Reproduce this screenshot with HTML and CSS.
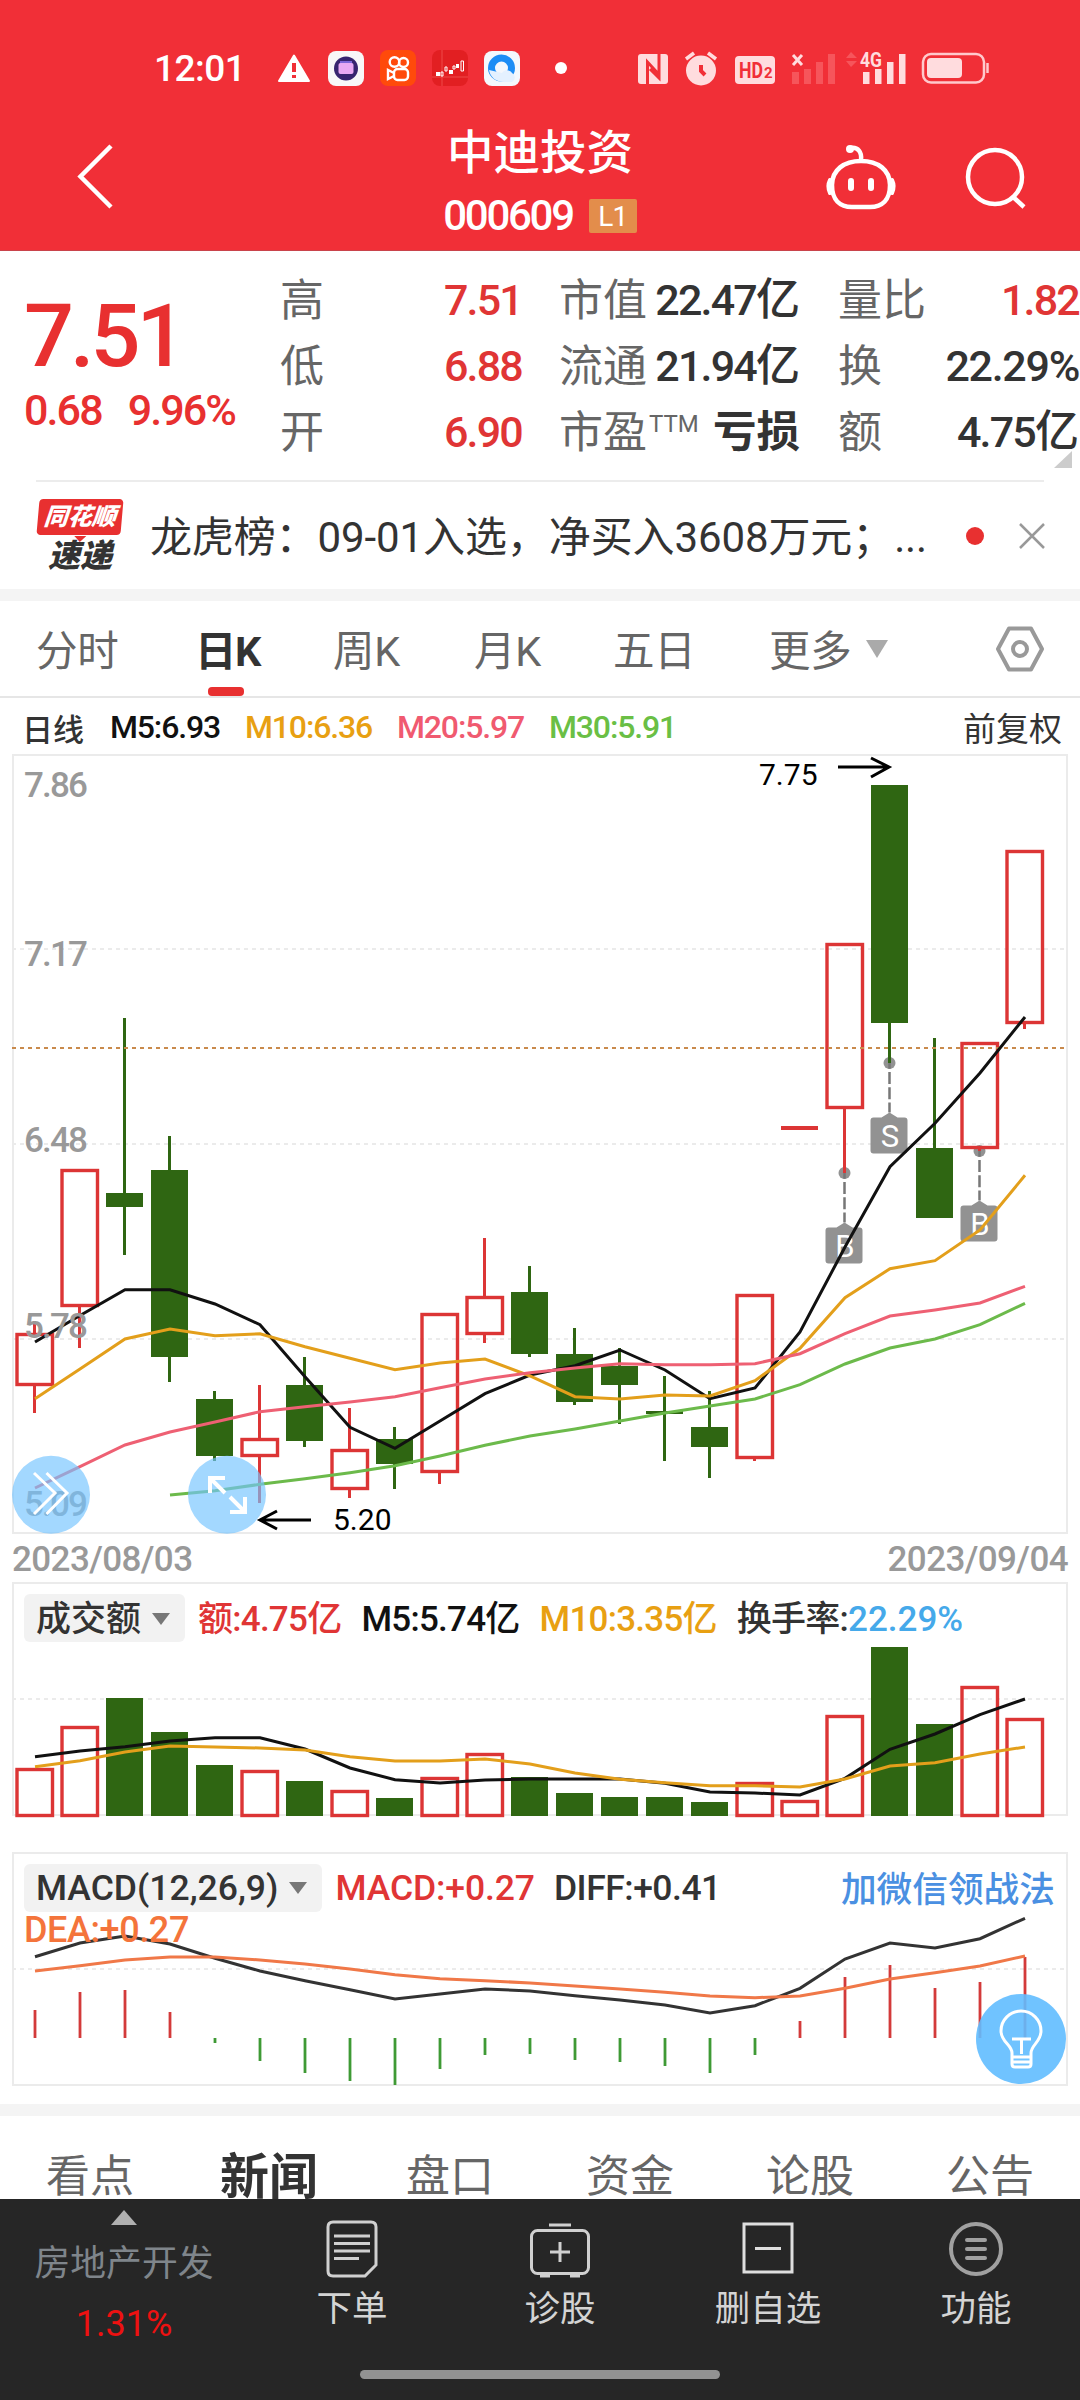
FILE: index.html
```html
<!DOCTYPE html>
<html lang="zh-CN">
<head>
<meta charset="utf-8">
<title>中迪投资 000609</title>
<link rel="stylesheet" href="styles.css">
</head>
<body>
<div class="app">
  <header class="top">
    <div class="status">
      <span class="clock">12:01</span>
      <svg class="status-apps" width="300" height="60" viewBox="270 40 300 60">
        <path d="M294 55.500L309 81H279Z" fill="#fff" stroke="#fff" stroke-width="2" stroke-linejoin="round"/>
        <path d="M294 63v9M294 75v3" stroke="#f12f37" stroke-width="4"/>
        <rect x="328" y="51" width="36" height="35" rx="8" fill="#f8f7f8"/>
        <circle cx="346" cy="68.500" r="12" fill="#37246f"/><path d="M340 61h12v3h-12z" fill="#7d66d8"/><rect x="338.500" y="63" width="15" height="11" rx="2" fill="#e9a9f3"/>
        <rect x="380" y="50" width="36" height="36" rx="8" fill="#ff4a0b"/>
        <g fill="none" stroke="#fff" stroke-width="2.400"><circle cx="394.500" cy="62" r="4.800"/><circle cx="403.500" cy="62.500" r="4.500"/><rect x="394" y="69" width="14" height="11" rx="3.500"/><path d="M394 73l-6-3v9l6-3"/></g>
        <rect x="432" y="50" width="36" height="36" rx="8" fill="#e21f22"/>
        <path d="M442 50v36M432 77h36" stroke="#ee4a48" stroke-width="1"/>
        <path d="M436 74h4M449 72h4M456 66h3" stroke="#fff" stroke-width="4"/><path d="M441 72h2v4h-2zM445 67h2v4h-2zM453 66h2v3h-2zM461 61h2.500v10h-2.500z" fill="none" stroke="#fff"/>
        <rect x="484" y="51" width="36" height="35" rx="8" fill="#f4f8fd"/>
        <circle cx="501.500" cy="68" r="10" fill="none" stroke="#1d8df5" stroke-width="7"/>
        <path d="M489 70c1 7 7 12 15 12h8a5 5 0 0 0 0-9a6 6 0 0 0-10 0z" fill="#e4f1ff"/>
        <circle cx="561" cy="68" r="6" fill="#fff"/>
      </svg>
      <svg class="status-sys" width="370" height="60" viewBox="630 40 370 60">
        <rect x="638" y="54" width="30" height="30" rx="3" fill="#ffdcde"/>
        <path d="M647.500 84V62l11 12M659 54v24l-9-9" fill="none" stroke="#f12f37" stroke-width="3"/>
        <circle cx="701" cy="70.500" r="15" fill="#ffdcde"/><path d="M686 59l8-6M716 59l-8-6" stroke="#ffdcde" stroke-width="3.500"/>
        <path d="M701 65v6l4 4" fill="none" stroke="#f12f37" stroke-width="4"/>
        <rect x="735" y="56" width="40" height="28" rx="4" fill="#ffdcde"/>
        <text x="739" y="78" class="hd" textLength="24" lengthAdjust="spacingAndGlyphs">HD<tspan class="hd2"></tspan></text><text x="764" y="78" class="hd2">2</text>
        <path d="M793 55l9 10M802 55l-9 10" stroke="#ffdcde" stroke-width="3"/>
        <path d="M792 72h7v12h-7zM804 69h7v15h-7zM816 62h7v22h-7zM828 54h7v30h-7zM846 58l5-6l6 6zM846 61h11l-6 6z" fill="#f6555b"/>
        <text x="860" y="67" class="net" textLength="22" lengthAdjust="spacingAndGlyphs">4G</text>
        <path d="M863 72h6.500v12h-6.500zM875 69h6.500v15h-6.500zM887 62h6.500v22h-6.500zM899 54h6.500v30h-6.500z" fill="#ffdcde"/>
        <rect x="923" y="54" width="61" height="28.500" rx="8" fill="none" stroke="#ffc9cc" stroke-width="2.500"/>
        <rect x="927" y="58" width="35" height="20" rx="4" fill="#ffdcde"/><path d="M987.500 63v10" stroke="#ffc9cc" stroke-width="2.500"/>
      </svg>
    </div>
    <div class="nav">
      <svg class="back" width="60" height="80" viewBox="65 137 60 80"><path d="M111 146L80.500 176.500L111 207" fill="none" stroke="#fff" stroke-width="4.500"/></svg>
      <div class="title">
        <h1>中迪投资</h1>
        <div class="code"><span>000609</span><b>L1</b></div>
      </div>
      <svg class="nav-icons" width="216" height="80" viewBox="820 137 216 80">
        <g fill="none" stroke="#fff" stroke-width="4.500" stroke-linecap="round">
          <path d="M861 161c-17 0-29 9-29 24c0 15 8 22 20 22h18c12 0 20-7 20-22c0-15-12-24-29-24zM861 160c1-8-3-13-10-12"/>
          <path d="M830 180c-2 4-2 9 0 13M892 180c2 4 2 9 0 13" stroke-width="4"/>
        </g>
        <circle cx="850" cy="149" r="4" fill="#fff"/>
        <path d="M851 181v7M871 181v7" stroke="#fff" stroke-width="6" stroke-linecap="round"/>
        <circle cx="995" cy="177" r="27" fill="none" stroke="#fff" stroke-width="4.500"/><path d="M1012 196l12 11" stroke="#fff" stroke-width="4.500"/>
      </svg>
    </div>
  </header>

  <section class="quote">
    <div class="price"><strong>7.51</strong><div class="change"><span>0.68</span><span>9.96%</span></div></div>
    <dl class="col prices">
      <div><dt>高</dt><dd class="up">7.51</dd></div>
      <div><dt>低</dt><dd class="up">6.88</dd></div>
      <div><dt>开</dt><dd class="up">6.90</dd></div>
    </dl>
    <dl class="col value">
      <div><dt>市值</dt><dd>22.47<i>亿</i></dd></div>
      <div><dt>流通</dt><dd>21.94<i>亿</i></dd></div>
      <div><dt>市盈<sup>TTM</sup></dt><dd><b>亏损</b></dd></div>
    </dl>
    <dl class="col turnover">
      <div><dt>量比</dt><dd class="up">1.82</dd></div>
      <div><dt>换</dt><dd class="rate">22.29%</dd></div>
      <div><dt>额</dt><dd>4.75<i>亿</i></dd></div>
    </dl>
    <svg class="corner" width="18" height="17"><path d="M18 0V17H0Z" fill="#ccc"/></svg>
  </section>

  <section class="news">
    <div class="brand"><span class="brand-top">同花顺</span><span class="brand-bottom">速递</span></div>
    <p>龙虎榜：09-01入选，净买入3608万元；...</p>
    <i class="dot"></i>
    <svg width="26" height="26" viewBox="0 0 26 26"><path d="M1 1L25 25M25 1L1 25" stroke="#999" stroke-width="2.500"/></svg>
  </section>

  <nav class="periods">
    <span>分时</span><span class="active">日K</span><span>周K</span><span>月K</span><span>五日</span>
    <span class="more">更多<svg width="22" height="18"><path d="M0 0H22L11 18Z" fill="#aaa"/></svg></span>
    <svg width="50" height="48" viewBox="0 0 50 48"><path d="M14 3.500H36L47 24L36 44.500H14L3 24Z" fill="none" stroke="#999" stroke-width="4" stroke-linejoin="round"/><circle cx="25" cy="24" r="7" fill="none" stroke="#999" stroke-width="4"/></svg>
  </nav>

  <div class="legend">
    <span class="l0">日线</span><span class="l1">M5:6.93</span><span class="l2">M10:6.36</span><span class="l3">M20:5.97</span><span class="l4">M30:5.91</span><span class="l5">前复权</span>
  </div>

  <div class="kline"><svg id="kline" width="1080" height="782" viewBox="0 754 1080 782"></svg></div>
  <div class="dates"><span>2023/08/03</span><span>2023/09/04</span></div>

  <section class="panel">
    <svg id="volume" width="1080" height="236" viewBox="0 1582 1080 236"></svg>
    <div class="panel-head vol-head">
      <span class="pill">成交额<svg width="18" height="12"><path d="M0 0H18L9 12Z" fill="#777"/></svg></span>
      <span class="up v1">额:4.75亿</span><span class="black v2">M5:5.74亿</span><span class="gold v3">M10:3.35亿</span><span class="v4">换手率:<em>22.29%</em></span>
    </div>
  </section>

  <section class="panel macd">
    <svg id="macd" width="1080" height="236" viewBox="0 1852 1080 236"></svg>
    <div class="panel-head">
      <span class="pill">MACD(12,26,9)<svg width="18" height="12"><path d="M0 0H18L9 12Z" fill="#777"/></svg></span>
      <span class="up m1">MACD:+0.27</span><span class="m2">DIFF:+0.41</span><a>加微信领战法</a>
      <span class="dea">DEA:+0.27</span>
    </div>
    <svg class="bulb" width="90" height="90" viewBox="976 1994 90 90">
      <circle cx="1021" cy="2039" r="45" fill="#60bdff" opacity=".9"/>
      <path d="M1012 2053c0-8-11-11-11-22a20 20 0 0 1 40 0c0 11-10 14-10 22v11q0 3-3 3h-13q-3 0-3-3zM1012 2057h19M1012 2062h19M1012 2039h19M1021.500 2039v15" fill="none" stroke="#fff" stroke-width="3"/>
    </svg>
  </section>

  <nav class="info-tabs"><span>看点</span><span class="active">新闻</span><span>盘口</span><span>资金</span><span>论股</span><span>公告</span></nav>

  <footer class="bar">
    <div class="sector"><svg width="26" height="15"><path d="M13 0L26 15H0Z" fill="#b0b0b0"/></svg><span>房地产开发</span><em>1.31%</em></div>
    <div class="action"><svg width="60" height="60" viewBox="0 0 60 60" fill="none" stroke="#d0d0d0" stroke-width="3"><path d="M11 3H49Q54 3 54 8V46L43 57H11Q6 57 6 52V8Q6 3 11 3ZM12 17H48M12 24.500H48M12 32H48M12 39.500H37"/></svg><span>下单</span></div>
    <div class="action"><svg width="62" height="60" viewBox="0 0 62 60" fill="none" stroke="#d0d0d0" stroke-width="3"><rect x="2.500" y="11.500" width="57" height="43" rx="6"/><path d="M20 6H42M31 23V43M21 33H41M11 57h10M41 57h10"/></svg><span>诊股</span></div>
    <div class="action"><svg width="60" height="60" viewBox="0 0 60 60" fill="none" stroke="#dedede" stroke-width="3"><path d="M6 5H54V53H6ZM17 29.500H43"/></svg><span>删自选</span></div>
    <div class="action"><svg width="60" height="60" viewBox="0 0 60 60" fill="none" stroke="#a0a0a0" stroke-width="4"><circle cx="30" cy="30" r="25"/><path d="M21 21H39M21 30H39M21 39H39" stroke-linecap="round"/></svg><span>功能</span></div>
    <i class="home"></i>
  </footer>
</div>
<script src="charts.js"></script>
</body>
</html>
```
FILE: styles.css
```css
* { box-sizing: border-box; }
body { margin: 0; background: #fff; color: #333; font-family: Roboto, "Noto Sans CJK SC", sans-serif; }
.app { width: 1080px; height: 2400px; overflow: hidden; display: flex; flex-direction: column; }
.app > * { flex: none; }
svg { display: block; flex: none; }
i, em { font-style: normal; }
h1, p, dl, dd { margin: 0; }
span, dt, dd, a { white-space: nowrap; }

.top { height: 251px; background: #f12f37; border-bottom: 1px solid #c9434b; color: #fff; }
.status { height: 100px; padding-top: 40px; display: flex; }
.clock { width: 116px; margin-left: 154px; font-size: 37px; font-weight: 500; line-height: 57px; letter-spacing: -.5px; }
.status-sys { margin-left: 60px; }
.hd { font: 700 22px Roboto; fill: #f12f37; }
.hd2 { font: 700 15px Roboto; fill: #f12f37; }
.net { font: 700 21px Roboto; fill: #ffdcde; }
.nav { height: 150px; display: flex; }
.back { margin: 37px 0 0 65px; }
.title { width: 300px; margin-left: 265px; padding-top: 20px; display: flex; flex-direction: column; align-items: center; }
.title h1 { font-size: 46.500px; font-weight: 500; line-height: 67px; }
.code { display: flex; align-items: center; gap: 16px; height: 57px; font-size: 42px; font-weight: 500; letter-spacing: -2.300px; }
.code b { width: 48px; height: 34px; border-radius: 2px; background: #e38d4b; font-size: 28px; font-weight: 400; line-height: 35px; text-align: center; letter-spacing: -1px; }
.nav-icons { margin: 37px 0 0 130px; }

.quote { position: relative; height: 231px; padding: 17px 1px 0 26px; display: grid; grid-template-columns: 254px 241px 38px 241px 38px 241px; }
.price { grid-column: 1; }
.prices { grid-column: 2; }
.value { grid-column: 4; }
.turnover { grid-column: 6; }
.quote::after { content: ""; position: absolute; left: 36px; right: 36px; bottom: 0; height: 2px; background: #ececec; }
.price { color: #e83030; font-weight: 500; }
.price strong { display: block; padding-top: 16px; margin-left: -2px; font-size: 88px; font-weight: 500; line-height: 104px; letter-spacing: -4px; }
.change { display: flex; gap: 26px; font-size: 43px; line-height: 50px; margin: -3px 0 0 -2px; letter-spacing: -1.900px; }
.col div { height: 66px; display: flex; justify-content: space-between; align-items: center; }
.col dt { color: #666; font-size: 44px; line-height: 66px; }
.col sup { position: relative; top: -16px; margin-left: 2px; font-size: 24px; line-height: 1; vertical-align: baseline; }
.col dd { margin-top: -2px; font-size: 43px; font-weight: 500; line-height: 66px; letter-spacing: -1.800px; }
.col dd i { font-size: 44px; letter-spacing: 0; }
.col dd b { font-size: 43.500px; letter-spacing: 0; }
.prices dd { margin-right: -1px; }
.col dd.rate { letter-spacing: -1.300px; }
.up, .col dd.up { color: #e03535; }
.corner { position: absolute; right: 8px; top: 200px; }

.news { height: 107px; padding: 0 35px 0 36px; display: flex; align-items: center; }
.brand { width: 88px; height: 74px; display: flex; flex-direction: column; align-items: center; font-weight: 900; font-style: italic; }
.brand-top { position: relative; width: 84px; height: 37px; border-radius: 4px; background: #e83030; color: #fff; font-size: 24px; line-height: 36px; text-align: center; transform: skewX(-5deg); }
.brand-top::after { content: ""; position: absolute; left: 38px; top: 37px; border: 6px solid transparent; border-top-color: #e83030; border-bottom: 0; }
.brand-bottom { margin-top: 4px; font-size: 32px; line-height: 35px; }
.news p { width: 817px; margin: -4px 0 0 26px; font-size: 42px; white-space: nowrap; letter-spacing: -.1px; }
.news .dot { width: 18px; height: 18px; border-radius: 50%; background: #e83030; }
.news svg { margin-left: 35px; }

.periods { height: 109px; border-top: 12px solid #f4f4f4; border-bottom: 2px solid #e6e6e6; padding-left: 36px; display: grid; grid-template-columns: 159px 138px 141px 139px 156px 226px 50px; align-items: center; color: #666; font-size: 41.500px; }
.periods > span { margin-top: -2px; letter-spacing: -.3px; }
.periods .active { position: relative; color: #333; font-weight: 700; letter-spacing: -1.500px; }
.periods .active::after { content: ""; position: absolute; left: 13px; bottom: -18px; width: 36px; height: 9px; border-radius: 4px; background: #e83030; }
.more { display: flex; align-items: center; gap: 15px; }
.more svg { margin-top: 2px; }

.legend { height: 56px; padding: 2px 18px 0 22px; display: grid; grid-template-columns: 88px 135px 152px 152px 200px 1fr; align-items: center; font-size: 32px; font-weight: 500; letter-spacing: -1.150px; }
.l0 { letter-spacing: 0; font-size: 31px; }
.l1, .black { color: #111; }
.l2, .gold { color: #e8a012; }
.l3 { color: #f05a70; }
.l4 { color: #6abf45; }
.l5 { justify-self: end; font-size: 33px; font-weight: 400; letter-spacing: 0; }
.kline { height: 780px; }
.axis { font: 500 35px Roboto; fill: #999; }
.mark { font: 400 30px Roboto; fill: #000; }
.tag { font: 400 31px Roboto; fill: #fff; text-anchor: middle; }
.dates { height: 48px; padding: 2px 12px 0; display: flex; justify-content: space-between; align-items: center; color: #999; font-size: 35px; font-weight: 500; letter-spacing: -.6px; }

.panel { position: relative; height: 270px; }
.panel.macd { height: 252px; }
.panel-head { position: absolute; left: 24px; right: 25px; top: 12px; height: 48px; display: flex; align-items: center; font-size: 35.500px; font-weight: 500; }
.vol-head { font-size: 35px; letter-spacing: -.75px; line-height: 48px; }
.pill { height: 48px; padding: 0 15px 0 12px; display: flex; align-items: center; gap: 11px; border-radius: 6px; background: #f2f2f2; }
.vol-head .pill { letter-spacing: 0; padding-top: 3px; }
.vol-head .pill svg { margin-top: -2px; }
.vol-head > span:not(.pill) { padding-top: 3px; }
.panel-head a { margin-left: auto; margin-top: -3px; color: #4a90e2; font-size: 35.700px; font-weight: 500; }
.v1 { margin-left: 13px; } .v2, .v3, .v4 { margin-left: 20px; }
.v4 em { color: #45a9ea; letter-spacing: 0; }
.m1 { margin-left: 13px; letter-spacing: -.1px; } .m2 { margin-left: 19px; letter-spacing: -.5px; }
.dea { position: absolute; left: 0; top: 45px; color: #f4743b; font-size: 36px; line-height: 42px; letter-spacing: -.4px; }
.bulb { position: absolute; left: 976px; top: 142px; }

.info-tabs { height: 95px; border-top: 12px solid #f4f4f4; padding-top: 40px; display: grid; grid-template-columns: repeat(6, 180px); align-items: center; justify-items: center; color: #666; font-size: 44px; line-height: 43px; }
.info-tabs .active { margin-left: -2px; color: #333; font-size: 49px; font-weight: 700; }

.bar { position: relative; height: 201px; background: #262626; display: grid; grid-template-columns: 248px repeat(4, 208px); }
.sector { padding-top: 11px; display: flex; flex-direction: column; align-items: center; color: #7f858b; font-size: 35.800px; }
.sector span { margin-top: 13px; line-height: 52px; }
.sector em { margin-top: 10px; color: #ee1111; font-size: 36px; line-height: 48px; }
.action { padding-top: 20px; display: flex; flex-direction: column; align-items: center; color: #d4d4d4; font-size: 35.500px; }
.action span { margin-top: 4px; line-height: 53px; }
.home { position: absolute; left: 360px; bottom: 21px; width: 360px; height: 9px; border-radius: 5px; background: #929292; }
```
FILE: charts.js
```js
const RED = '#dc3535', GREEN = '#2f6612';
const X = i => 34.5 + 45 * i;
const rect = (x, y, w, h, a) => `<rect x="${x}" y="${y}" width="${w}" height="${h}" ${a}/>`;
const vline = (x, y1, y2, c, w = 3) => `<path d="M${x} ${y1}V${y2}" stroke="${c}" stroke-width="${w}"/>`;
const poly = (ys, c, from = 0, w = 3) =>
  `<polyline points="${ys.map((y, i) => `${X(i + from) + .5},${y}`).join(' ')}" fill="none" stroke="${c}" stroke-width="${w}"/>`;
const grid = (y, c = '#ebebeb', d = '4 4') =>
  `<path d="M12 ${y}H1067" stroke="${c}" stroke-width="2" stroke-dasharray="${d}"/>`;
const bar = (i, up, top, bottom) => up
  ? rect(X(i) - 17.5, top + 1.5, 35.5, bottom - top - 3, `fill="none" stroke="${RED}" stroke-width="3.4"`)
  : rect(X(i) - 18.5, top, 37, bottom - top, `fill="${GREEN}"`);

// up flag, wick top, body top, body bottom, wick bottom
const candles = [
  [1,1321,1333,1386,1413],[1,1169,1169,1307,1348],[0,1018,1193,1207,1255],[0,1136,1170,1357,1382],
  [0,1391,1399,1456,1461],[1,1385,1438,1457,1503],[0,1357,1385,1441,1447],[1,1408,1449,1490,1498],
  [0,1427,1439,1464,1489],[1,1313,1313,1473,1484],[1,1238,1296,1335,1343],[0,1266,1292,1354,1357],
  [0,1328,1354,1402,1405],[0,1348,1366,1385,1424],[0,1376,1411,1414,1461],[0,1391,1427,1447,1478],
  [1,1294,1294,1459,1461],[2],[1,943,943,1109,1173],[0,785,785,1023,1063],
  [0,1038,1148,1218,1218],[1,1042,1042,1149,1151],[1,850,850,1024,1029]
];
const tag = (i, dot, apex, ch) => {
  const x = X(i);
  return `<circle cx="${x}" cy="${dot}" r="6" fill="#929292"/>
    <path d="M${x} ${dot}V${apex}" stroke="#777" stroke-width="2.500" stroke-dasharray="12 3.300" stroke-dashoffset="-9"/>
    <path d="M${x} ${apex}l8 5h7q3 0 3 3v30q0 3-3 3h-31q-3 0-3-3v-30q0-3 3-3h8z" fill="#929292"/>
    <text class="tag" x="${x + .5}" y="${apex + 34}">${ch}</text>`;
};
let k = rect(13, 755, 1054, 778, 'fill="none" stroke="#ebebeb" stroke-width="2"') + grid(949) + grid(1144) + grid(1339);
k += tag(18, 1173, 1222.5, 'B') + tag(19, 1063, 1112.5, 'S') + tag(21, 1151, 1200.5, 'B');
candles.forEach(([up, wt, t, b, wb], i) => {
  if (up === 2) { k += rect(781, 1126, 37, 4, `fill="${RED}"`); return; }
  const c = up ? RED : GREEN;
  if (wt < t) k += vline(X(i), wt, t, c);
  if (wb > b) k += vline(X(i), b, wb, c);
  k += bar(i, up, t, b);
});
k += grid(1048, '#c98a4c');
k += poly([1342,1315.5,1289.7,1289.7,1304,1324.7,1376.7,1427.3,1448.3,1421,1393.7,1375,1365.7,1350,1370,1398.7,1388,1332,1247,1166.7,1123.3,1073,1017], '#111');
k += poly([1398.7,1369,1339,1329,1335.7,1333.7,1346.7,1358.3,1369.7,1363,1359,1376,1396.7,1399,1395,1396,1380.7,1348.3,1297.7,1268.7,1260.7,1230,1175.3], '#e39f1b');
k += poly([1488,1466.7,1445,1432,1422,1411.7,1406.7,1402,1396.7,1387.7,1379,1372.7,1368,1363.7,1364.7,1364.7,1363.7,1353.7,1333.7,1316,1310,1303,1286.3], '#ee6073');
k += poly([1495,1490.7,1484.3,1478.7,1472.7,1465.7,1456,1445.3,1436,1429,1421,1413,1406,1399,1384.7,1364,1348,1339,1324.7,1303.3], '#6cba4b', 3);
[['7.86',797],['7.17',966],['6.48',1152],['5.78',1338],['5.09',1516]].forEach(([t, y]) => {
  k += `<text class="axis" x="24" y="${y}" textLength="64">${t}</text>`;
});
k += `<g fill="none" stroke="#000" stroke-width="3"><path d="M838 767H889M871 758L889 767L871 777M311 1520H260M277 1511L260 1520L277 1529"/></g>
  <text class="mark" x="759" y="785">7.75</text><text class="mark" x="333" y="1530">5.20</text>
  <g fill="#74c4ff" opacity=".66"><circle cx="51" cy="1494.700" r="39"/><circle cx="227" cy="1494.700" r="39"/></g>
  <g fill="none" stroke="#fff" stroke-width="3"><path d="M34 1473L55 1493L34 1514M46.500 1473L67 1493L46.500 1514"/>
  <path stroke-width="4" d="M225 1493L210 1478M210 1493V1478H225M230 1497L245 1512M245 1497V1512H230"/></g>`;
document.getElementById('kline').innerHTML = k;

// up flag, bar top
const vol = [[1,1768],[1,1726],[0,1698],[0,1732],[0,1765],[1,1770],[0,1781],[1,1790],[0,1798],[1,1777],[1,1753],[0,1777],
  [0,1793],[0,1797],[0,1797],[0,1802],[1,1782],[1,1800],[1,1715],[0,1647],[0,1724],[1,1686],[1,1718]];
let v = rect(13, 1583, 1054, 232, 'fill="none" stroke="#ebebeb" stroke-width="2"') + grid(1699);
vol.forEach(([up, top], i) => { v += bar(i, up, top, up ? 1817 : 1816); });
v += poly([1756.7,1751,1746.7,1741,1737.7,1737.7,1749,1768,1779.7,1783,1780,1779,1779,1779,1783.3,1792,1793,1795,1778.3,1749.3,1734,1714.7,1699], '#111');
v += poly([1766.7,1760.7,1752,1746,1747,1748,1750,1756.7,1761,1761,1759,1764,1773,1779.3,1782.7,1785.7,1785.7,1787,1779,1766,1762.7,1754,1747], '#e39f1b');
document.getElementById('volume').innerHTML = v;

const hist = [2010,1992,1990,2012,2043,2061,2073,2081,2085,2069,2055,2054,2060,2062,2066,2073,2055,2021,1977,1965,1988,1982,1957];
let m = rect(13, 1853, 1054, 232, 'fill="none" stroke="#ebebeb" stroke-width="2"') + grid(1969);
hist.forEach((y, i) => { m += vline(X(i) + .5, 2038, y, y < 2038 ? '#d33a3a' : '#3f9a35', 2.8); });
m += poly([1956.7,1943,1936,1944,1958.3,1971,1980.7,1989.7,1999,1994,1989,1991,1995.7,2000,2005,2013,2005.7,1988.3,1959,1943,1948,1938.7,1918.3], '#333');
m += poly([1971,1965.7,1960,1957,1957,1960,1964,1969,1974.7,1978.7,1980.7,1983,1986,1989,1992.3,1996,1997.7,1996,1988.3,1979,1972.7,1966,1956], '#f07848');
document.getElementById('macd').innerHTML = m;
```
